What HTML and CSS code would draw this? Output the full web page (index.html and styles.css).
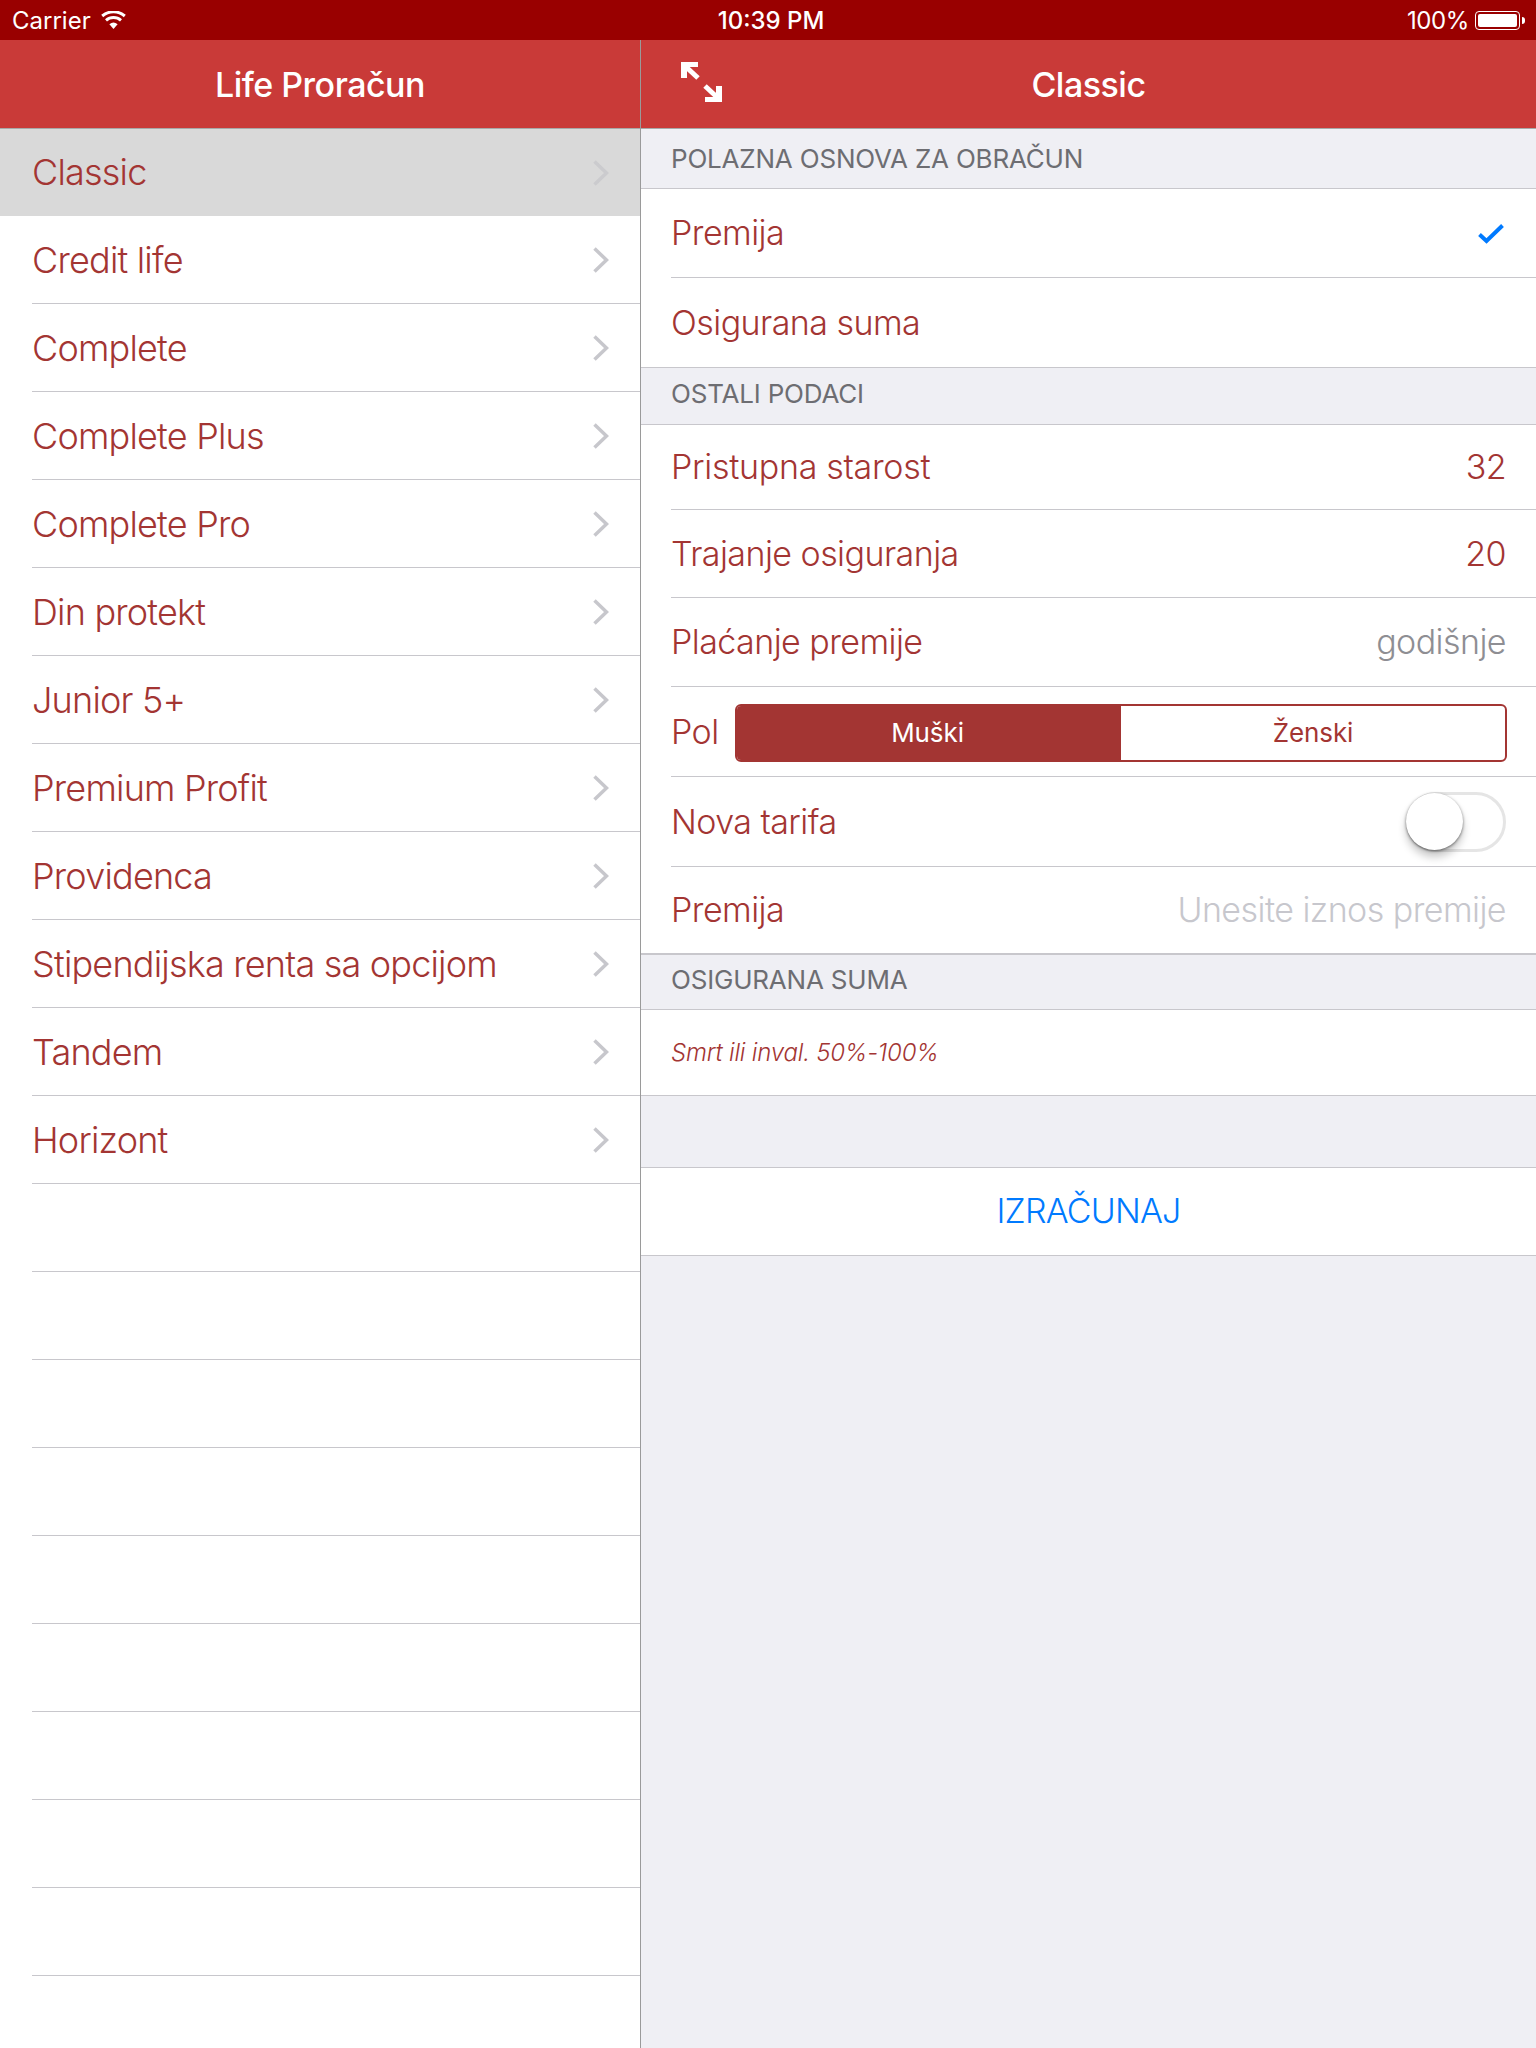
FILE: index.html
```html
<!DOCTYPE html>
<html lang="en">
<head>
    <meta charset="UTF-8">
    <title>Life Proračun</title>
    <link rel="stylesheet" href="styles.css">
</head>
<body>

    <!-- Status bar -->
    <div class="status-bar">
        <div class="status-left">
            <span>Carrier</span>
            <svg class="wifi" width="25" height="18" viewBox="0 0 25 18">
                <path d="M12.5 18 L8.4 13.2 A6.4 6.4 0 0 1 16.6 13.2 Z" fill="#fff"/>
                <path d="M5 9.4 A11.4 11.4 0 0 1 20 9.4" fill="none" stroke="#fff" stroke-width="3"/>
                <path d="M1.2 5 A17.4 17.4 0 0 1 23.8 5" fill="none" stroke="#fff" stroke-width="3"/>
            </svg>
        </div>
        <div class="status-time">10:39 PM</div>
        <div class="status-right">
            <span>100%</span>
            <div class="battery"><div class="battery-fill"></div></div>
            <div class="battery-tip"></div>
        </div>
    </div>

    <div class="app">
        <!-- Master list -->
        <div class="master">
            <div class="nav">Life Proračun</div>
            <div class="list">
                <div class="list-row selected"><div class="list-inner"><span>Classic</span><svg class="chevron" viewBox="0 0 16 26"><path d="M1.5 1.5 L13.5 13 L1.5 24.5"/></svg></div></div>
                <div class="list-row"><div class="list-inner"><span>Credit life</span><svg class="chevron" viewBox="0 0 16 26"><path d="M1.5 1.5 L13.5 13 L1.5 24.5"/></svg></div></div>
                <div class="list-row"><div class="list-inner"><span>Complete</span><svg class="chevron" viewBox="0 0 16 26"><path d="M1.5 1.5 L13.5 13 L1.5 24.5"/></svg></div></div>
                <div class="list-row"><div class="list-inner"><span>Complete Plus</span><svg class="chevron" viewBox="0 0 16 26"><path d="M1.5 1.5 L13.5 13 L1.5 24.5"/></svg></div></div>
                <div class="list-row"><div class="list-inner"><span>Complete Pro</span><svg class="chevron" viewBox="0 0 16 26"><path d="M1.5 1.5 L13.5 13 L1.5 24.5"/></svg></div></div>
                <div class="list-row"><div class="list-inner"><span>Din protekt</span><svg class="chevron" viewBox="0 0 16 26"><path d="M1.5 1.5 L13.5 13 L1.5 24.5"/></svg></div></div>
                <div class="list-row"><div class="list-inner"><span>Junior 5+</span><svg class="chevron" viewBox="0 0 16 26"><path d="M1.5 1.5 L13.5 13 L1.5 24.5"/></svg></div></div>
                <div class="list-row"><div class="list-inner"><span>Premium Profit</span><svg class="chevron" viewBox="0 0 16 26"><path d="M1.5 1.5 L13.5 13 L1.5 24.5"/></svg></div></div>
                <div class="list-row"><div class="list-inner"><span>Providenca</span><svg class="chevron" viewBox="0 0 16 26"><path d="M1.5 1.5 L13.5 13 L1.5 24.5"/></svg></div></div>
                <div class="list-row"><div class="list-inner"><span>Stipendijska renta sa opcijom</span><svg class="chevron" viewBox="0 0 16 26"><path d="M1.5 1.5 L13.5 13 L1.5 24.5"/></svg></div></div>
                <div class="list-row"><div class="list-inner"><span>Tandem</span><svg class="chevron" viewBox="0 0 16 26"><path d="M1.5 1.5 L13.5 13 L1.5 24.5"/></svg></div></div>
                <div class="list-row"><div class="list-inner"><span>Horizont</span><svg class="chevron" viewBox="0 0 16 26"><path d="M1.5 1.5 L13.5 13 L1.5 24.5"/></svg></div></div>
                <!-- Empty rows -->
                <div class="list-row"><div class="list-inner"></div></div>
                <div class="list-row"><div class="list-inner"></div></div>
                <div class="list-row"><div class="list-inner"></div></div>
                <div class="list-row"><div class="list-inner"></div></div>
                <div class="list-row"><div class="list-inner"></div></div>
                <div class="list-row"><div class="list-inner"></div></div>
                <div class="list-row"><div class="list-inner"></div></div>
                <div class="list-row"><div class="list-inner"></div></div>
                <div class="list-row"><div class="list-inner"></div></div>
                <div class="list-row"><div class="list-inner"></div></div>
            </div>
        </div>

        <!-- Detail form -->
        <div class="detail">
            <div class="nav">
                <svg class="expand" width="41" height="40" viewBox="0 0 41 40">
                    <path d="M0 0 H17 V5 H6 V16 H0 Z" fill="#fff"/>
                    <path d="M3 3 L17 16" stroke="#fff" stroke-width="5" fill="none"/>
                    <path d="M41 40 H24 V35 H35 V24 H41 Z" fill="#fff"/>
                    <path d="M38 37 L24 24" stroke="#fff" stroke-width="5" fill="none"/>
                </svg>
                Classic
            </div>

            <div class="section-head head-first">POLAZNA OSNOVA ZA OBRAČUN</div>
            <div class="form-group">
                <div class="form-row row-premija"><div class="form-inner"><span>Premija</span>
                    <svg class="check" width="26" height="20" viewBox="0 0 26 20"><path d="M1.5 10.5 L8.5 17 L24.5 1.5" fill="none" stroke="#007aff" stroke-width="4"/></svg>
                </div></div>
                <div class="form-row row-suma"><div class="form-inner last"><span>Osigurana suma</span></div></div>
            </div>

            <div class="section-head head-second">OSTALI PODACI</div>
            <div class="form-group">
                <div class="form-row row-starost"><div class="form-inner"><span class="label-wide">Pristupna starost</span><span>32</span></div></div>
                <div class="form-row row-trajanje"><div class="form-inner"><span>Trajanje osiguranja</span><span>20</span></div></div>
                <div class="form-row row-placanje"><div class="form-inner"><span>Plaćanje premije</span><span class="value-gray">godišnje</span></div></div>
                <div class="form-row row-pol"><div class="form-inner">
                    <span>Pol</span>
                    <div class="segmented">
                        <div class="segment active">Muški</div>
                        <div class="segment">Ženski</div>
                    </div>
                </div></div>
                <div class="form-row row-tarifa"><div class="form-inner">
                    <span>Nova tarifa</span>
                    <div class="switch"><div class="knob"></div></div>
                </div></div>
                <div class="form-row row-iznos"><div class="form-inner last"><span>Premija</span><span class="placeholder">Unesite iznos premije</span></div></div>
            </div>

            <div class="section-head head-third">OSIGURANA SUMA</div>
            <div class="form-group">
                <div class="form-row row-smrt"><div class="form-inner last"><span class="small-italic">Smrt ili inval. 50%-100%</span></div></div>
            </div>

            <div class="spacer"></div>
            <div class="calc-button">IZRAČUNAJ</div>
        </div>
    </div>

</body>
</html>
```

FILE: styles.css
```css
:root {
    --status-bg: #990000;
    --nav-bg: #c93a38;
    --red-text: #a33533;
    --line: #c8c7cc;
    --group-bg: #efeff4;
    --blue: #007aff;
}

* { box-sizing: border-box; margin: 0; padding: 0; }

body {
    width: 1536px;
    height: 2048px;
    overflow: hidden;
    background: #ffffff;
    font-family: "Inter", "Roboto", sans-serif;
    font-weight: 300;
    color: var(--red-text);
}

/* Status bar */
.status-bar {
    display: grid;
    grid-template-columns: 1fr 1fr 1fr;
    align-items: center;
    height: 40px;
    padding: 0 11px 0 12px;
    background: var(--status-bg);
    color: #ffffff;
    font-size: 24px;
    font-weight: 400;
}
.status-left { display: flex; align-items: center; gap: 10px; }
.status-time { padding-left: 5px; text-align: center; font-weight: 500; }
.status-right { display: flex; align-items: center; justify-content: flex-end; }
.status-right span { margin-right: 6px; letter-spacing: -0.4px; }
.battery {
    width: 45px;
    height: 19px;
    padding: 2px;
    border: 1px solid #ffffff;
    border-radius: 4px;
}
.battery-fill { height: 100%; background: #ffffff; border-radius: 2px; }
.battery-tip { width: 3px; height: 7px; margin-left: 2px; background: #ffffff; border-radius: 0 3px 3px 0; }

.app {
    display: grid;
    grid-template-columns: 641px 1fr;
    height: 2008px;
}

/* Navigation bars */
.nav {
    position: relative;
    display: flex;
    align-items: center;
    justify-content: center;
    height: 89px;
    background: var(--nav-bg);
    border-bottom: 1px solid #a8a8a8;
    color: #ffffff;
    font-size: 34px;
    font-weight: 500;
    letter-spacing: -0.5px;
}
.expand { position: absolute; left: 40px; top: 22px; }

/* Master list */
.master { border-right: 1px solid #9a9a9a; overflow: hidden; }
.list-row { height: 88px; padding-left: 32px; font-size: 36px; letter-spacing: -0.8px; }
.list-row.selected { height: 87px; background: #d9d9d9; }
.list-inner {
    display: flex;
    align-items: center;
    justify-content: space-between;
    height: 100%;
    padding-right: 31px;
    border-bottom: 1px solid var(--line);
}
.selected .list-inner { padding-bottom: 2px; border-bottom: none; }
.chevron {
    width: 16px;
    height: 26px;
    fill: none;
    stroke: #c7c7cc;
    stroke-width: 3.5;
}
.selected .chevron { margin-top: 2px; stroke: #cbcbce; }

/* Detail form */
.detail { background: var(--group-bg); }
.section-head {
    display: flex;
    align-items: center;
    padding-left: 30px;
    border-bottom: 1px solid var(--line);
    color: #6d6d72;
    font-size: 26px;
    font-weight: 400;
    letter-spacing: -0.2px;
}
.head-first { height: 60px; }
.head-second { height: 57px; padding-bottom: 5px; }
.head-third { height: 56px; padding-bottom: 5px; border-top: 1px solid var(--line); }

.form-group { background: #ffffff; }
.form-row { padding-left: 30px; font-size: 34px; letter-spacing: -0.55px; }
.form-inner {
    display: flex;
    align-items: center;
    justify-content: space-between;
    height: 100%;
    padding-right: 30px;
    border-bottom: 1px solid var(--line);
}
.form-inner.last { margin-left: -30px; padding-left: 30px; }
.row-premija { height: 89px; }
.row-suma { height: 90px; }
.row-starost { height: 85px; }
.row-trajanje { height: 88px; }
.row-placanje { height: 89px; }
.row-pol { height: 90px; }
.row-tarifa { height: 90px; }
.row-iznos { height: 87px; }
.row-smrt { height: 86px; }

/* Small nudges so the text sits on the same line as the original */
.row-premija .form-inner,
.row-starost .form-inner,
.row-placanje .form-inner,
.row-iznos .form-inner { padding-bottom: 2px; }
.row-trajanje .form-inner { padding-bottom: 1px; }

.label-wide { letter-spacing: -0.3px; }
.check { margin: 3px 2px 0 0; }
.value-gray { color: #8e8e93; }
.placeholder { color: #c7c7cd; }
.small-italic { font-size: 24px; font-style: italic; letter-spacing: -0.2px; }

/* Segmented control */
.segmented {
    display: grid;
    grid-template-columns: 384px 1fr;
    width: 772px;
    height: 58px;
    margin: 2px -1px 0 0;
    border: 2px solid var(--red-text);
    border-radius: 6px;
    overflow: hidden;
    font-size: 26px;
    font-weight: 400;
    letter-spacing: -0.1px;
}
.segment { display: flex; align-items: center; justify-content: center; }
.segment.active { padding-right: 3px; background: var(--red-text); color: #ffffff; }

/* Switch */
.switch {
    width: 100px;
    height: 60px;
    padding: 1px;
    border: 3px solid #e5e5e5;
    border-radius: 30px;
    background: #ffffff;
}
.knob {
    width: 57px;
    height: 57px;
    margin: -3px 0 0 -4px;
    border-radius: 50%;
    background: #ffffff;
    box-shadow: 0 7px 9px rgba(0, 0, 0, 0.22), 0 1px 3px rgba(0, 0, 0, 0.5);
}

.spacer { height: 71px; }
.calc-button {
    display: flex;
    align-items: center;
    justify-content: center;
    height: 89px;
    padding-bottom: 2px;
    background: #ffffff;
    border-top: 1px solid var(--line);
    border-bottom: 1px solid var(--line);
    color: var(--blue);
    font-size: 34px;
    letter-spacing: -0.8px;
}
```
